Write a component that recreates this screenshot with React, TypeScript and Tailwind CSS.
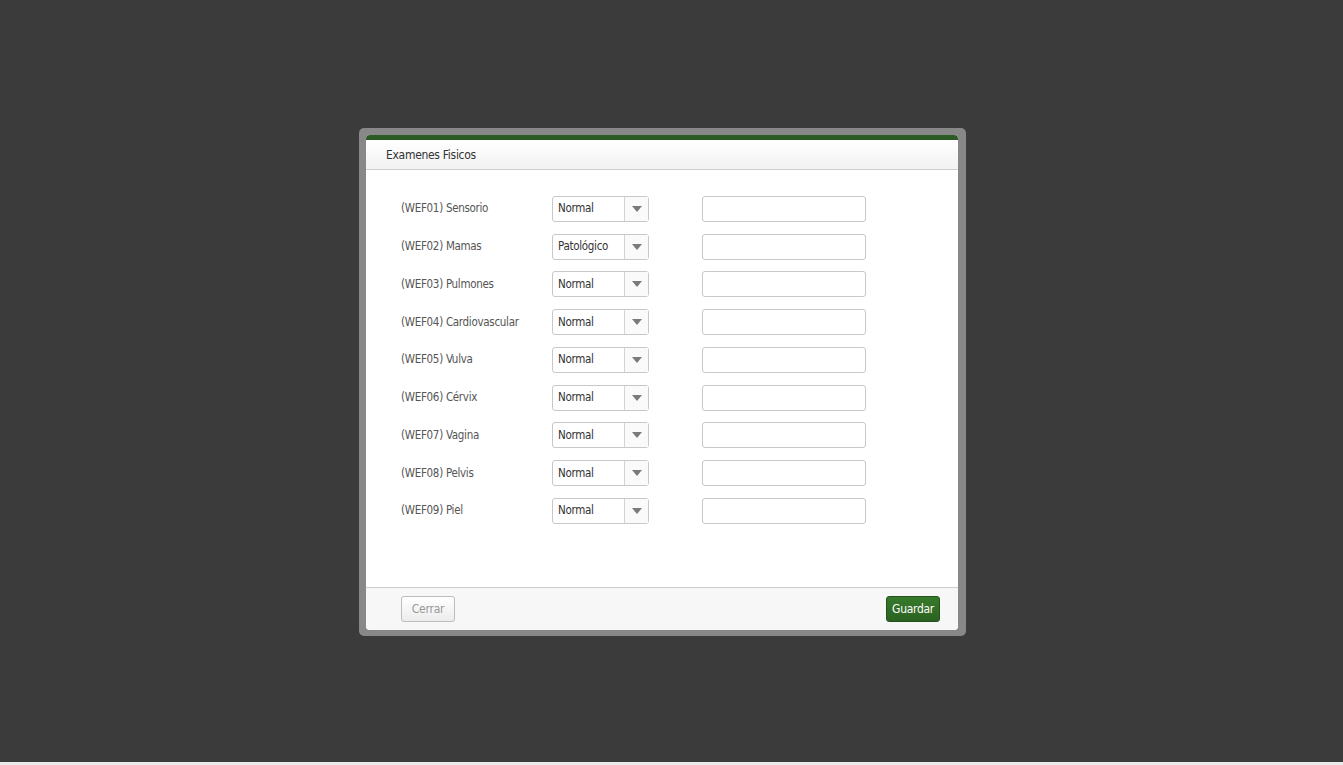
const rows = [
  { code: "WEF01", name: "Sensorio", value: "Normal" },
  { code: "WEF02", name: "Mamas", value: "Patológico" },
  { code: "WEF03", name: "Pulmones", value: "Normal" },
  { code: "WEF04", name: "Cardiovascular", value: "Normal" },
  { code: "WEF05", name: "Vulva", value: "Normal" },
  { code: "WEF06", name: "Cérvix", value: "Normal" },
  { code: "WEF07", name: "Vagina", value: "Normal" },
  { code: "WEF08", name: "Pelvis", value: "Normal" },
  { code: "WEF09", name: "Piel", value: "Normal" },
];

function FakeSelect({ value }: { value: string }) {
  return (
    <div className="flex h-[26px] w-[97px] items-stretch rounded-[3px] border border-[#c8c8c8] bg-white">
      <span className="flex flex-1 items-center pl-[5px] text-[11.5px] tracking-[-0.3px] text-[#333]">{value}</span>
      <span className="flex w-[24px] items-center justify-center border-l border-[#d4d4d4] bg-[#fafafa]">
        <svg width="10" height="6" viewBox="0 0 10 6">
          <path d="M0 0 L10 0 L5 6 Z" fill="#7a7a7a" />
        </svg>
      </span>
    </div>
  );
}

export default function App() {
  return (
    <div className="font-['DejaVu_Sans_Condensed','Liberation_Sans',sans-serif]">
      <div className="h-[762px] bg-[#3b3b3b] pl-[359px] pt-[128px]">
        <div className="flex h-[508px] w-[607px] flex-col rounded-[5px] bg-[#888888] pb-[6px] pl-[7px] pr-[8px] pt-[7px]">
          <div className="flex flex-1 flex-col overflow-hidden rounded-[4px] bg-white">
            <div className="h-[5px] bg-[#2c5a25]" />
            <div className="flex h-[30px] items-center border-b border-[#cfcfcf] bg-gradient-to-b from-white to-[#f2f2f2] pl-[20px] text-[12px] tracking-[-0.3px] text-[#333]">
              Examenes Fisicos
            </div>
            <div className="flex-1 pl-[35px] pt-[20px]">
              {rows.map((r) => (
                <div key={r.code} className="flex h-[37.75px] items-center">
                  <span className="w-[151px] text-[11.5px] tracking-[-0.3px] text-[#555]">
                    ({r.code}) {r.name}
                  </span>
                  <FakeSelect value={r.value} />
                  <div className="ml-[53px] h-[26px] w-[164px] rounded-[3px] border border-[#c8c8c8] bg-white" />
                </div>
              ))}
            </div>
            <div className="flex h-[43px] items-center justify-between border-t border-[#cccccc] bg-[#f7f7f7] pl-[35px] pr-[18px]">
              <button className="h-[26px] w-[54px] rounded-[3px] border border-[#bdbdbd] bg-gradient-to-b from-white to-[#ececec] text-[12px] tracking-[-0.2px] text-[#999]">
                Cerrar
              </button>
              <button className="h-[26px] w-[54px] rounded-[3px] border border-[#24521c] bg-gradient-to-b from-[#377a2b] to-[#2b6221] text-[12px] tracking-[-0.3px] text-white">
                Guardar
              </button>
            </div>
          </div>
        </div>
      </div>
      <div className="h-[3px] bg-[#ebebeb]" />
    </div>
  );
}
